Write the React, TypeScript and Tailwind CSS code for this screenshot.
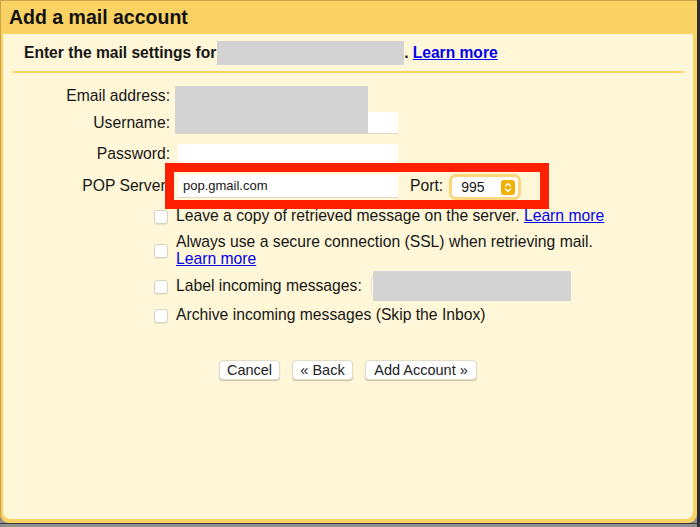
import React from "react";

function Checkbox() {
  return (
    <span className="mt-[2px] block h-[14px] w-[14px] shrink-0 rounded-[3px] border border-[#d9d4c2] bg-white shadow-[0_1px_1px_rgba(0,0,0,0.08)]" />
  );
}

function Stepper() {
  return (
    <svg width="14" height="15" viewBox="0 0 14 15">
      <rect x="0" y="0" width="14" height="15" rx="3" fill="#f2b000" />
      <path d="M4.5 6 L7 3.6 L9.5 6" fill="none" stroke="#fff" strokeWidth="1.4" strokeLinecap="round" strokeLinejoin="round" />
      <path d="M4.5 9 L7 11.4 L9.5 9" fill="none" stroke="#fff" strokeWidth="1.4" strokeLinecap="round" strokeLinejoin="round" />
    </svg>
  );
}

function Button({ children, w }: { children: React.ReactNode; w: string }) {
  return (
    <button
      className={`flex h-[20px] items-center justify-center rounded-[4px] border border-[#e2dcc6] bg-white text-[14.5px] leading-none text-[#222] shadow-[0_1px_1px_rgba(0,0,0,0.22)] ${w}`}
    >
      {children}
    </button>
  );
}

export default function App() {
  return (
    <div
      className="relative h-[527px] w-[700px] overflow-hidden bg-[#8f8f8f]"
      style={{ fontFamily: '"Liberation Sans", Arial, sans-serif' }}
    >
      <div className="absolute right-0 top-0 h-full w-[3px] bg-[#2e2e2e]" />
      <div className="absolute bottom-[3px] left-0 h-[1px] w-full bg-[#3a3a3a]" />
      <div className="relative flex h-[523px] w-[697px] flex-col rounded-b-[9px] bg-[#fad264] pb-[4px] pl-[3px] pr-[4px] shadow-[inset_1px_1px_0_#c9a548]">
        <div className="flex h-[34px] shrink-0 items-center pl-[6px] pt-[2px] text-[19.5px] font-bold text-[#111]">
          Add a mail account
        </div>
        <div className="relative flex flex-1 flex-col rounded-b-[7px] bg-[#fff7d7] text-[15.7px] text-[#161616]">
          {/* heading */}
          <div className="mt-[7px] flex h-[24px] items-center pl-[21px] text-[15.6px] font-bold">
            <span>Enter the mail settings for</span>
            <span className="ml-[1px] h-[24px] w-[187px] bg-[#d3d3d3]" />
            <span>.</span>
            <a className="ml-[4px] text-[#0000ee] underline">Learn more</a>
          </div>
          <div className="mx-[10px] mt-[6px] h-[2px] bg-[#fad264]" />

          {/* form rows */}
          <div className="mt-[11px] flex h-[24px] items-center">
            <span className="w-[167px] text-right">Email address:</span>
          </div>
          <div className="mt-[3px] flex h-[24px] items-center">
            <span className="w-[167px] text-right">Username:</span>
            <span className="ml-[5px] h-[22px] w-[223px] border-b border-[#ddd8c4] bg-white" />
          </div>
          <div className="mt-[7px] flex h-[24px] items-center">
            <span className="w-[167px] text-right">Password:</span>
            <span className="ml-[8px] h-[20px] w-[220px] border-b border-[#ddd8c4] bg-white" />
          </div>
          <div className="mt-[8px] flex h-[24px] items-center">
            <span className="w-[167px] text-right">POP Server:</span>
            <span className="ml-[8px] flex h-[23px] w-[220px] items-center border-b border-[#ddd8c4] bg-white pl-[5px] text-[13px]">
              pop.gmail.com
            </span>
            <span className="ml-[12px]">Port:</span>
            <span className="ml-[6px] mt-[2px] flex h-[26px] w-[72px] items-center justify-between rounded-[7px] border-[3px] border-[#fbd67c] bg-white pl-[9px] pr-[3px] text-[14px]">
              <span>995</span>
              <Stepper />
            </span>
          </div>

          {/* checkbox rows */}
          <div className="flex flex-col pl-[151px]">
            <div className="mt-[8px] flex h-[20px] items-center gap-[8px]">
              <Checkbox />
              <span>
                Leave a copy of retrieved message on the server.{" "}
                <a className="text-[#0000ee] underline">Learn more</a>
              </span>
            </div>
            <div className="mt-[7px] flex h-[34px] items-center gap-[8px]">
              <Checkbox />
              <span className="leading-[17px]">
                Always use a secure connection (SSL) when retrieving mail.
                <br />
                <a className="text-[#0000ee] underline">Learn more</a>
              </span>
            </div>
            <div className="mt-[4px] flex h-[30px] items-center gap-[8px]">
              <Checkbox />
              <span>Label incoming messages:</span>
              <span className="relative ml-[1px] h-[30px] w-[200px]">
                <span className="absolute left-0 top-[3px] h-[24px] w-[30px] rounded-[5px] border border-[#e4dfcc] bg-white" />
                <span className="absolute left-[2px] top-0 h-[30px] w-[198px] bg-[#d3d3d3]" />
              </span>
            </div>
            <div className="mt-[4px] flex h-[20px] items-center gap-[8px]">
              <Checkbox />
              <span>Archive incoming messages (Skip the Inbox)</span>
            </div>
          </div>

          {/* buttons */}
          <div className="mt-[35px] flex justify-center gap-[12px]">
            <Button w="w-[61px]">Cancel</Button>
            <Button w="w-[61px]">« Back</Button>
            <Button w="w-[112px]">Add Account »</Button>
          </div>

          {/* redaction over email/username */}
          <div className="absolute left-[172px] top-[52px] h-[47px] w-[193px] bg-[#d3d3d3]" />
          {/* red annotation box */}
          <div className="absolute left-[162px] top-[129px] h-[46px] w-[384px] border-[9px] border-[#fe2000]" />
        </div>
      </div>
    </div>
  );
}
